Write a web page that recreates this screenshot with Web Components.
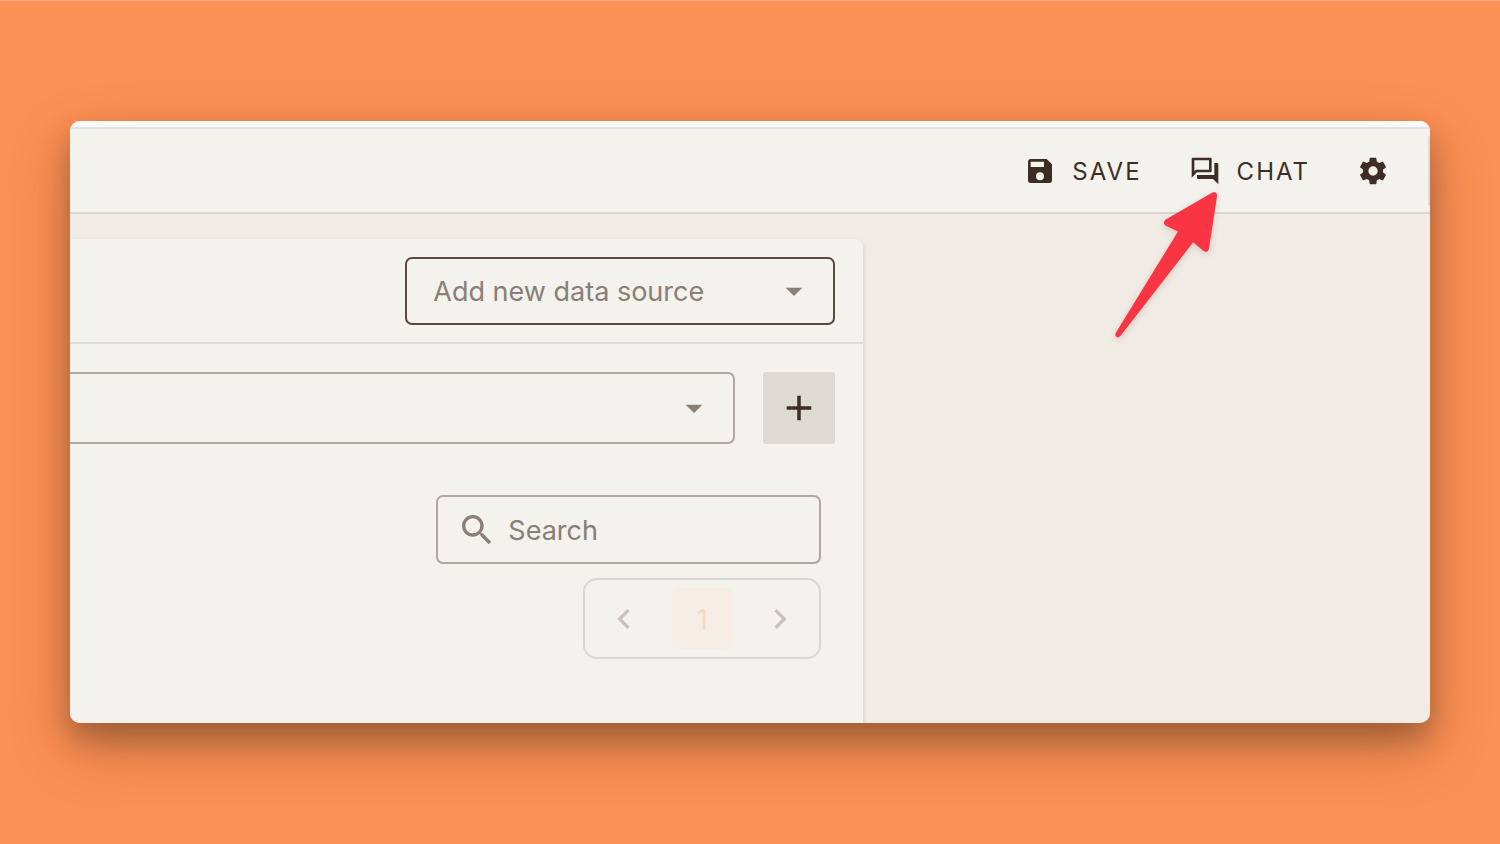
<!DOCTYPE html>
<html lang="en">
<head>
<meta charset="utf-8">
<title>Data sources</title>
<style>
  body { margin: 0; font-family: Inter, "Noto Sans", sans-serif; color: #3e2c26; background: #fd9054; }
</style>
</head>
<body>
<app-stage>
  <app-window>
    <app-toolbar slot="toolbar">
      <tool-button icon="save">SAVE</tool-button>
      <tool-button icon="chat">CHAT</tool-button>
      <tool-button icon="cog" label="Settings"></tool-button>
    </app-toolbar>
    <source-panel>
      <select-field slot="head" tone="strong" label="Data source" placeholder="Add new data source"></select-field>
      <select-field slot="pick" tone="cut" label="Selected source"></select-field>
      <add-button slot="pick"></add-button>
      <search-field></search-field>
      <page-nav></page-nav>
    </source-panel>
    <pointer-arrow slot="overlay"></pointer-arrow>
  </app-window>
</app-stage>

<script>
const ICONS = {
  save: 'M15,9H5V5H15M12,19A3,3 0 0,1 9,16A3,3 0 0,1 12,13A3,3 0 0,1 15,16A3,3 0 0,1 12,19M17,3H5C3.89,3 3,3.9 3,5V19A2,2 0 0,0 5,21H19A2,2 0 0,0 21,19V7L17,3Z',
  chat: 'M15,4V11H5.17L4,12.17V4H15M16,2H3A1,1 0 0,0 2,3V17L6,13H16A1,1 0 0,0 17,12V3A1,1 0 0,0 16,2M21,6H19V15H6V17A1,1 0 0,0 7,18H18L22,22V7A1,1 0 0,0 21,6Z',
  cog: 'M12,15.5A3.5,3.5 0 0,1 8.5,12A3.5,3.5 0 0,1 12,8.5A3.5,3.5 0 0,1 15.5,12A3.5,3.5 0 0,1 12,15.5M19.43,12.97C19.47,12.65 19.5,12.33 19.5,12C19.5,11.67 19.47,11.34 19.43,11L21.54,9.37C21.73,9.22 21.78,8.95 21.66,8.73L19.66,5.27C19.54,5.05 19.27,4.96 19.05,5.05L16.56,6.05C16.04,5.66 15.5,5.32 14.87,5.07L14.5,2.42C14.46,2.18 14.25,2 14,2H10C9.75,2 9.54,2.18 9.5,2.42L9.13,5.07C8.5,5.32 7.96,5.66 7.44,6.05L4.95,5.05C4.73,4.96 4.46,5.05 4.34,5.27L2.34,8.73C2.21,8.95 2.27,9.22 2.46,9.37L4.57,11C4.53,11.34 4.5,11.67 4.5,12C4.5,12.33 4.53,12.65 4.57,12.97L2.46,14.63C2.27,14.78 2.21,15.05 2.34,15.27L4.34,18.73C4.46,18.95 4.73,19.03 4.95,18.95L7.44,17.94C7.96,18.34 8.5,18.68 9.13,18.93L9.5,21.58C9.54,21.82 9.75,22 10,22H14C14.25,22 14.46,21.82 14.5,21.58L14.87,18.93C15.5,18.67 16.04,18.34 16.56,17.94L19.05,18.95C19.27,19.03 19.54,18.95 19.66,18.73L21.66,15.27C21.78,15.05 21.73,14.78 21.54,14.63L19.43,12.97Z',
  down: 'M7,10L12,15L17,10H7Z',
  plus: 'M19,13H13V19H11V13H5V11H11V5H13V11H19V13Z',
  search: 'M15.5,14H14.71L14.43,13.73C15.41,12.59 16,11.11 16,9.5A6.5,6.5 0 1,0 9.5,16C11.11,16 12.59,15.41 13.73,14.43L14,14.71V15.5L19,20.49L20.49,19L15.5,14M9.5,14A4.5,4.5 0 1,1 14,9.5A4.5,4.5 0 0,1 9.5,14Z',
  left: 'M15.41,16.58L10.83,12L15.41,7.41L14,6L8,12L14,18L15.41,16.58Z',
  right: 'M8.59,16.58L13.17,12L8.59,7.41L10,6L16,12L10,18L8.59,16.58Z'
};
const icon = (name, size) =>
  `<svg class="icon" width="${size}" height="${size}" viewBox="0 0 24 24" fill="currentColor" aria-hidden="true"><path d="${ICONS[name]}"/></svg>`;
const base = `*{box-sizing:border-box} button,input,select{font:inherit;color:inherit;margin:0;border:0;background:none} .icon{display:block;flex:none}`;

function element(name, render) {
  customElements.define(name, class extends HTMLElement {
    constructor() {
      super();
      this.attachShadow({ mode: 'open' });
    }
    connectedCallback() {
      const { css, html } = render(this);
      this.shadowRoot.innerHTML = `<style>${base}${css}</style>${html}`;
    }
  });
}

element('app-stage', () => ({
  css: `:host{box-sizing:border-box;display:grid;min-height:100vh;padding:120px 70px 121px;border-top:1px solid #fbae85}`,
  html: `<slot></slot>`
}));

element('app-window', () => ({
  css: `:host{display:block;position:relative;border-radius:10px;box-shadow:0 24px 60px rgba(80,50,30,.32),0 16px 28px rgba(80,50,30,.34)}
    .frame{display:flex;flex-direction:column;height:100%;border-radius:10px;overflow:hidden;background:#f1ebe5}
    .strip{height:8px;background:#f9f9fe;border-bottom:2px solid #e3e2e9}
    main{flex:1;display:grid;grid-template-columns:7fr 5fr;padding-top:25px}`,
  html: `<div class="frame"><div class="strip"></div><slot name="toolbar"></slot><main><slot></slot></main></div><slot name="overlay"></slot>`
}));

element('app-toolbar', () => ({
  css: `:host{display:block;background:#f3f2ec;border-bottom:2px solid #d9d7d1}
    header{display:flex;align-items:stretch;height:83px;padding:7px 0}
    nav{flex:1;display:flex;justify-content:flex-end;align-items:center;gap:47px;padding-right:39px;border-right:2px solid #dedcd6}`,
  html: `<header><nav aria-label="Actions"><slot></slot></nav></header>`
}));

element('tool-button', el => ({
  css: `:host{display:block}
    button{display:flex;align-items:center;gap:16px;padding:0;font-size:24px;line-height:32px;letter-spacing:2px}
    span{padding-top:2px}`,
  html: `<button type="button"${el.getAttribute('label') ? ` aria-label="${el.getAttribute('label')}"` : ''}>${icon(el.getAttribute('icon'), 32)}${el.getAttribute('label') ? '' : '<span><slot></slot></span>'}</button>`
}));

element('source-panel', () => ({
  css: `:host{display:block;background:#f3f2ec;border-top-right-radius:8px;box-shadow:0 2px 4px rgba(90,60,40,.22)}
    .head{display:flex;justify-content:flex-end;padding:18px 28px 17px;border-bottom:2px solid #dedcd6}
    .pick{display:flex;gap:28px;padding:28px 28px 0 0}
    .list{display:flex;flex-direction:column;align-items:flex-end;gap:14px;padding:51px 42px 60px}`,
  html: `<div class="head"><slot name="head"></slot></div><div class="pick"><slot name="pick"></slot></div><div class="list"><slot></slot></div>`
}));

element('select-field', el => ({
  css: `:host{display:grid;width:430px;color:#8a7e77}
    :host([tone=cut]){flex:1;width:auto}
    select,.icon{grid-area:1/1}
    select{appearance:none;width:100%;height:68px;padding:2px 64px 0 26px;font-size:27px;line-height:36px;border:2px solid #5a4740;border-radius:7px}
    :host([tone=cut]) select{height:72px;border-color:#b0a7a1;border-left:0;border-radius:0 7px 7px 0}
    .icon{align-self:center;justify-self:end;margin-right:21px;pointer-events:none}`,
  html: `<select aria-label="${el.getAttribute('label')}"><option>${el.getAttribute('placeholder') || ''}</option></select>${icon('down', 40)}`
}));

element('add-button', () => ({
  css: `:host{display:block}
    button{display:grid;place-items:center;width:72px;height:72px;padding:0;border-radius:3px;background:#dddad3}`,
  html: `<button type="button" aria-label="Add">${icon('plus', 42)}</button>`
}));

element('search-field', () => ({
  css: `:host{display:block;width:385px;color:#8a7e77}
    label{display:flex;align-items:center;gap:11px;height:69px;padding:0 19px;border:2px solid #b0a7a1;border-radius:7px}
    input{flex:1;min-width:0;padding:2px 0 0;font-size:27px;line-height:36px;outline:0}
    input::placeholder{color:inherit;opacity:1}`,
  html: `<label>${icon('search', 40)}<input type="search" placeholder="Search" aria-label="Search"></label>`
}));

element('page-nav', () => ({
  css: `:host{display:block}
    nav{display:flex;gap:18px;padding:8px 9px;border:2px solid #d9d7d1;border-radius:14px}
    button{display:grid;place-items:center;width:60px;height:61px;padding:0;border-radius:6px;font-size:27px;line-height:36px;color:#c8c1bc}
    .current{padding-top:2px;color:#f9d6c4;background:#f6ede6}`,
  html: `<nav aria-label="Pages"><button type="button" aria-label="Previous page">${icon('left', 40)}</button><button type="button" class="current" aria-current="page">1</button><button type="button" aria-label="Next page">${icon('right', 40)}</button></nav>`
}));

element('pointer-arrow', () => ({
  css: `:host{position:absolute;top:69px;right:210px;pointer-events:none}
    svg{display:block;overflow:visible;filter:drop-shadow(0 2px 3px rgba(90,50,40,.2))}`,
  html: `<svg width="110" height="152" viewBox="1110 190 110 152" aria-hidden="true"><path fill="#fa3543" d="M1212.4 192.6Q1217.4 191 1217 196.4L1209 248.4Q1207.5 253.5 1203.2 250.8L1193.2 242.2L1120.8 335.6Q1118.6 338.6 1116 336.6Q1114.6 335 1116 332.4L1178 231.5L1165.4 225.4Q1162.4 222.6 1165.4 219.8Z"/></svg>`
}));
</script>
</body>
</html>
